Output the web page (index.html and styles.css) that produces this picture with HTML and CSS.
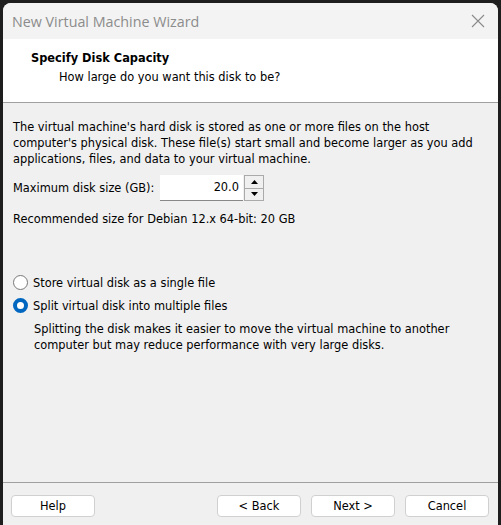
FILE: index.html
```html
<!DOCTYPE html>
<html>
<head>
<meta charset="utf-8">
<link rel="stylesheet" href="styles.css">
</head>
<body>
<div class="window">
  <div class="titlebar">
    <span class="title">New Virtual Machine Wizard</span>
    <svg class="close" width="14" height="14" viewBox="0 0 14 14"><path d="M1 1 L13 13 M13 1 L1 13" stroke="#8a8a8a" stroke-width="1.1" fill="none"/></svg>
  </div>
  <div class="header">
    <div class="h-title">Specify Disk Capacity</div>
    <div class="h-sub">How large do you want this disk to be?</div>
  </div>
  <div class="content">
    <p class="para">The virtual machine's hard disk is stored as one or more files on the host computer's physical disk. These file(s) start small and become larger as you add applications, files, and data to your virtual machine.</p>
    <div class="size-row">
      <span class="label">Maximum disk size (GB):</span>
      <div class="spin">
        <div class="spin-input">20.0</div>
        <div class="spin-btns">
          <div class="sbtn"><svg width="7" height="4" viewBox="0 0 7 4"><path d="M3.5 0 L7 4 L0 4 Z" fill="#000"/></svg></div>
          <div class="sbtn"><svg width="7" height="4" viewBox="0 0 7 4"><path d="M0 0 L7 0 L3.5 4 Z" fill="#000"/></svg></div>
        </div>
      </div>
    </div>
    <p class="rec">Recommended size for Debian 12.x 64-bit: 20 GB</p>
    <div class="radios">
      <label class="radio"><span class="circle"></span><span>Store virtual disk as a single file</span></label>
      <label class="radio"><span class="circle on"></span><span>Split virtual disk into multiple files</span></label>
      <p class="desc">Splitting the disk makes it easier to move the virtual machine to another computer but may reduce performance with very large disks.</p>
    </div>
  </div>
  <div class="footer">
    <button class="btn">Help</button>
    <div class="spacer"></div>
    <button class="btn">&lt; Back</button>
    <button class="btn">Next &gt;</button>
    <button class="btn">Cancel</button>
  </div>
</div>
</body>
</html>
```

FILE: styles.css
```css
html, body {
  margin: 0;
  padding: 0;
  background: #1e1e1e;
  width: 501px;
  height: 525px;
  overflow: hidden;
}
.window {
  margin: 3px 3px 0 3px;
  width: 495px;
  height: 530px;
  background: #f0f0f0;
  border-radius: 8px 8px 0 0;
  overflow: hidden;
  display: flex;
  flex-direction: column;
  font-family: "DejaVu Sans", sans-serif;
  font-size: 11.4px;
  color: #000;
}
.titlebar {
  height: 36px;
  background: #f3f3f3;
  display: flex;
  align-items: center;
  justify-content: space-between;
  padding: 0 13px 0 9px;
  flex: none;
}
.title {
  font-family: "Open Sans", sans-serif;
  font-size: 14.3px;
  color: #8c8c8c;
}
.close { display: block; }
.header {
  height: 64px;
  background: #fff;
  border-bottom: 1px solid #a0a0a0;
  box-sizing: border-box;
  padding: 11px 0 0 28px;
  flex: none;
}
.h-title {
  font-weight: bold;
  font-size: 11.4px;
  line-height: 16px;
}
.h-sub {
  margin: 3px 0 0 28px;
  line-height: 16px;
}
.content {
  flex: 1;
  padding: 16px 10px 0 10px;
  border-bottom: 1px solid #a0a0a0;
}
.para {
  margin: 0;
  line-height: 16px;
}
.size-row {
  display: flex;
  align-items: center;
  margin-top: 8px;
}
.label {
  width: 147px;
  white-space: nowrap;
}
.spin {
  display: flex;
  height: 26px;
}
.spin-input {
  width: 83px;
  background: #fff;
  border-bottom: 1px solid #888;
  box-sizing: border-box;
  text-align: right;
  padding: 5px 4px 0 0;
}
.spin-btns {
  display: flex;
  flex-direction: column;
  border: 1px solid #aaa;
  margin-left: 1px;
  width: 20px;
  box-sizing: border-box;
}
.sbtn {
  flex: 1;
  display: flex;
  align-items: center;
  justify-content: center;
  background: #f0f0f0;
}
.sbtn + .sbtn { border-top: 1px solid #aaa; }
.rec {
  margin: 10px 0 0 0;
  line-height: 16px;
}
.radios { margin-top: 44px; }
.radio {
  display: flex;
  align-items: center;
  height: 23px;
  gap: 5px;
}
.circle {
  width: 15px;
  height: 15px;
  border: 1px solid #777;
  border-radius: 50%;
  box-sizing: border-box;
  background: #fff;
}
.circle.on {
  border: 4.5px solid #0067c0;
  background: #fff;
}
.desc {
  margin: 4px 0 0 21px;
  line-height: 16px;
}
.footer {
  height: 38px;
  flex: none;
  display: flex;
  align-items: flex-start;
  padding: 12px 9px 0 8px;
  gap: 10px;
}
.spacer { flex: 1; }
.btn {
  width: 84px;
  height: 22px;
  background: #fff;
  border: 1px solid #d0d0d0;
  border-radius: 4px;
  font-family: "DejaVu Sans", sans-serif;
  font-size: 11.4px;
  color: #000;
  padding: 0;
}
```
